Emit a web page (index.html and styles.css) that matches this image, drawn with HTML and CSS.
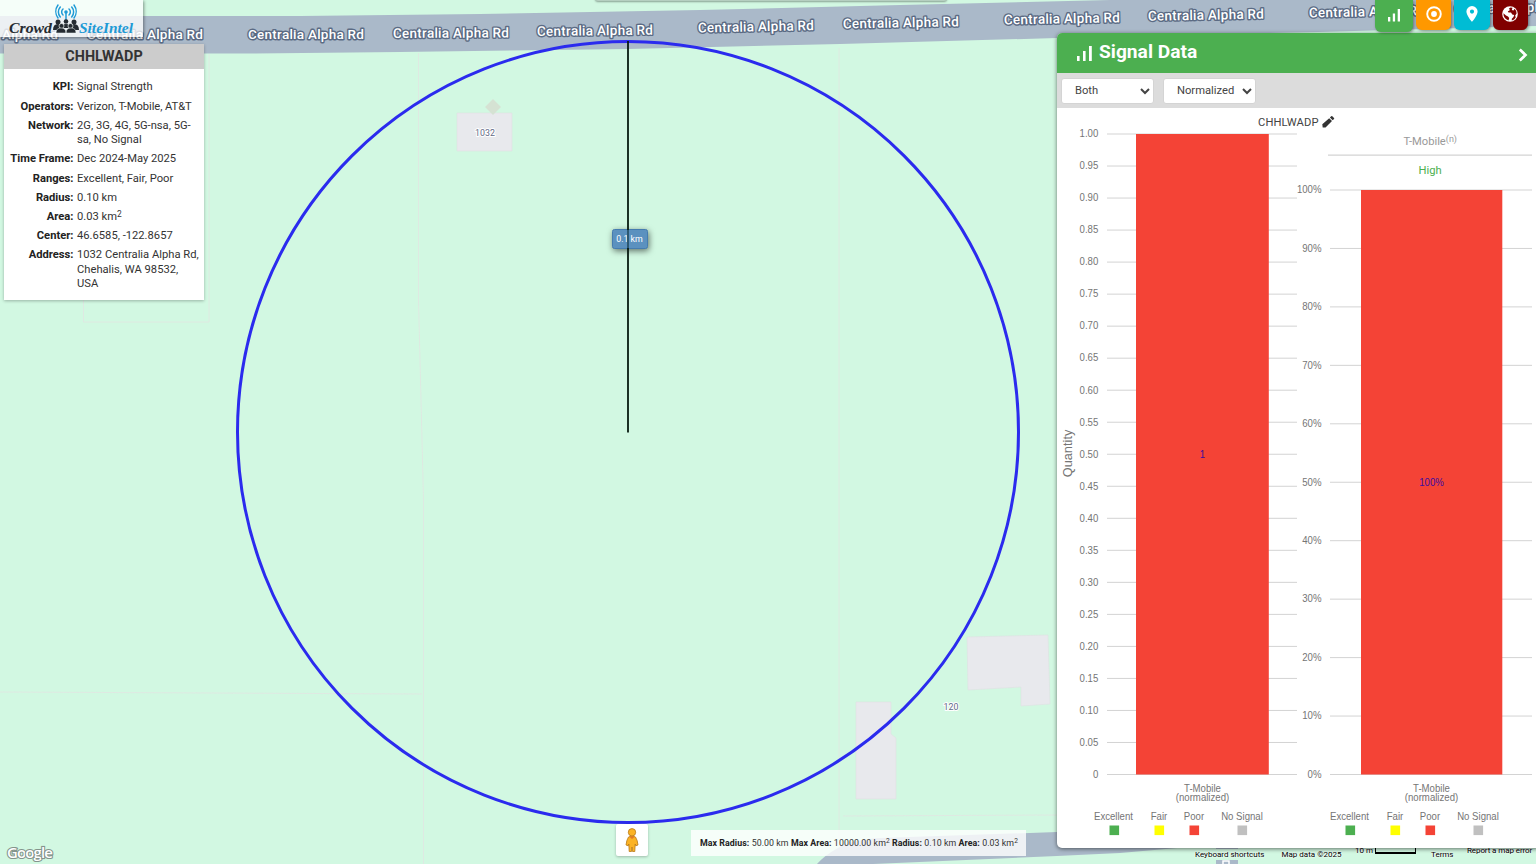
FILE: index.html
```html
<!DOCTYPE html>
<html lang="en">
<head>
<meta charset="utf-8">
<title>Crowd SiteIntel</title>
<link rel="stylesheet" href="styles.css">
</head>
<body>
<main class="app">
  <svg class="map" viewBox="0 0 1536 864" aria-label="Map">
    <rect width="1536" height="864" fill="#d2f8e2"/>
    <g class="parcel">
      <path d="M418.500 53V300L423.500 500V864M839 48V864M0 692L422 694M83.500 300V322H209V54M843 816L1057 815"/>
    </g>
    <path class="road" d="M0 16H300L480 14L700 10L900 5L1110 0H1536V26L1318 32L1057 38L840 44L628 49L400 52L250 53.500H0Z"/>
    <path class="road" d="M817 864Q825 855 838 848Q850 840 880 838L1057 832L1200 828V846L1120 853L1057 856L873 864Z"/>
    <path class="road" d="M1216 846H1238V849H1216ZM1216 860H1238V864H1216Z"/>
    <path d="M1223 864V861H1229V864" fill="none" stroke="#fff" stroke-width="1.500"/>
    <path class="building" d="M457 113H512V151H457ZM967 637L1048 635L1050 704L1021 706V687L968 690ZM856 702H891V734L896 738V799H856Z"/>
    <path d="M493 99L501 107L493 115L485 107Z" fill="#d5e2d3"/>
    <g id="road-labels" class="road-label"></g>
    <g class="house-no"><text x="485" y="136">1032</text><text x="951" y="710">120</text></g>
    <circle cx="628" cy="432" r="390.500" fill="none" stroke="#2b2bee" stroke-width="3"/>
    <g class="radius-tag"><rect x="612.500" y="229.500" width="35" height="19" rx="2"/><text x="629.500" y="242">0.1 km</text></g>
    <path d="M628 41V432.500" stroke="#061a10" stroke-width="1.800"/>
    <path d="M628 230V248" stroke="#4682b4" stroke-width="2" opacity=".55"/>
    <text class="google" x="7" y="858" textLength="46">Google</text>
  </svg>

  <div class="top-strip"></div>

  <div class="logo">
    <svg viewBox="0 0 143 38">
      <g fill="none" stroke="#1e9ad6" stroke-width="1.500" stroke-linecap="round">
        <path d="M63 9a4 4 0 0 0 0 6M69 9a4 4 0 0 1 0 6M60.300 7a7.500 7.500 0 0 0 0 10M71.700 7a7.500 7.500 0 0 1 0 10M58 5a11 11 0 0 0 0 13M74 5a11 11 0 0 1 0 13"/>
        <path d="M66 12V21"/>
      </g>
      <circle cx="66" cy="12" r="1.800" fill="#1e9ad6"/>
      <g fill="#252b31">
        <circle cx="58" cy="22" r="2.500"/><circle cx="66" cy="21.500" r="2.300"/><circle cx="74" cy="22" r="2.500"/>
        <path d="M53 30q0-6 5-6t5 6zM62 28q0-4 4-4t4 4zM69 30q0-6 5-6t5 6z"/>
        <circle cx="61.500" cy="26" r="2.500" stroke="#eff7f4" stroke-width=".7"/><circle cx="70.500" cy="26" r="2.500" stroke="#eff7f4" stroke-width=".7"/>
        <path d="M56 33q0-5 5-5t5 5zM66 33q0-5 5-5t5 5z" stroke="#eff7f4" stroke-width=".5"/>
      </g>
      <text x="9" y="33" textLength="43" lengthAdjust="spacingAndGlyphs" fill="#252b31">Crowd</text>
      <text x="79" y="33" textLength="54" lengthAdjust="spacingAndGlyphs" fill="#1e9ad6">SiteIntel</text>
    </svg>
  </div>

  <aside class="info">
    <h2>CHHLWADP</h2>
    <dl>
      <dt>KPI:</dt><dd>Signal Strength</dd>
      <dt>Operators:</dt><dd class="tight">Verizon, T-Mobile, AT&amp;T</dd>
      <dt>Network:</dt><dd>2G, 3G, 4G, 5G-nsa, 5G-<br>sa, No Signal</dd>
      <dt>Time Frame:</dt><dd>Dec 2024-May 2025</dd>
      <dt>Ranges:</dt><dd>Excellent, Fair, Poor</dd>
      <dt>Radius:</dt><dd>0.10 km</dd>
      <dt>Area:</dt><dd>0.03 km<sup>2</sup></dd>
      <dt>Center:</dt><dd>46.6585, -122.8657</dd>
      <dt>Address:</dt><dd>1032 Centralia Alpha Rd,<br>Chehalis, WA 98532,<br>USA</dd>
    </dl>
  </aside>

  <div class="pegman">
    <svg viewBox="0 0 32 32">
      <path d="M12.500 13Q16 11 19.500 13Q21.500 16 22 21L19.800 21.800L19.200 20L18.800 27.500H16.500L16 23L15.500 27.500H13.200L12.800 20L12.200 21.800L10 21Q10.500 16 12.500 13Z" fill="#fbb324" stroke="#b87918" stroke-width=".8"/>
      <path d="M13 12.500L16 15L19 12.500Z" fill="#e57825"/>
      <circle cx="16" cy="8.300" r="3.700" fill="#fbb324" stroke="#b87918" stroke-width=".8"/>
    </svg>
  </div>

  <div class="limits"><b>Max Radius:</b> 50.00 km <b>Max Area:</b> 10000.00 km<sup>2</sup> <b>Radius:</b> 0.10 km <b>Area:</b> 0.03 km<sup>2</sup></div>

  <footer class="credits">
    <span class="c-keys">Keyboard shortcuts</span><span class="c-data">Map data ©2025</span><span class="c-scale">10 m <i></i></span><span class="c-terms">Terms</span><span class="c-report">Report a map error</span>
  </footer>

  <section class="panel">
    <header>
      <svg class="bars" viewBox="0 0 15 15"><path d="M0 10h2.600v5H0zM6 5h2.600v10H6zM12 0h2.800v15H12z" fill="#fff"/></svg>
      <h1>Signal Data</h1>
      <svg class="chevron" viewBox="0 0 10 14"><path d="M1.800 1.500L7.500 7L1.800 12.500" fill="none" stroke="#fff" stroke-width="2.700"/></svg>
    </header>
    <div class="tools">
      <select><option>Both</option></select>
      <select><option>Normalized</option></select>
    </div>
    <svg class="charts" viewBox="1057 108 479 740">
      <text class="ui dark" x="1258" y="126" textLength="60.500">CHHLWADP</text>
      <path transform="translate(1321 115)" d="M1.300 9.300L1.700 12.500L4.500 12.600L11 6L8.200 3.200ZM8.900 2.500L11.700 5.300L13 4Q13.500 3.400 13 2.900L11.300 1.200Q10.700.7 10.200 1.200Z" fill="#333"/>
      <text class="ui" x="1403.500" y="145">T-Mobile<tspan dy="-3.500" font-size="9">(n)</tspan></text>
      <path d="M1328 155.200H1532" stroke="#d3d3d3" stroke-width="1.300"/>
      <text class="ui high" x="1418.500" y="173.500">High</text>
      <g id="left-axis"></g>
      <g id="right-axis"></g>
      <rect x="1136" y="134" width="132.800" height="640.500" fill="#f44336"/>
      <rect x="1361" y="190" width="141.300" height="584.500" fill="#f44336"/>
      <g class="mid tick value"><text x="1202.500" y="457.800">1</text><text x="1431.500" y="485.800">100%</text></g>
      <text class="quantity" transform="translate(1072 453.500) rotate(-90)">Quantity</text>
      <g class="mid tick"><text x="1202.500" y="791.500">T-Mobile</text><text x="1202.500" y="801">(normalized)</text><text x="1431.500" y="791.500">T-Mobile</text><text x="1431.500" y="801">(normalized)</text></g>
      <g id="legend" class="mid tick"></g>
    </svg>
  </section>

  <nav class="tabs">
    <a class="tab green"><svg viewBox="0 0 16 16"><path d="M2 10h2.300v4.500H2zM6.800 6.500h2.300v8H6.800zM11.700 2h2.300v12.500h-2.300z" fill="#fff"/></svg></a>
    <a class="tab orange"><svg viewBox="0 0 16 16"><circle cx="8" cy="8" r="6.800" fill="none" stroke="#fff" stroke-width="1.900"/><circle cx="8" cy="8" r="2.900" fill="#fff"/></svg></a>
    <a class="tab cyan"><svg viewBox="0 0 16 16"><path fill-rule="evenodd" d="M8 0A5.600 5.600 0 0 0 2.400 5.600C2.400 9.500 8 16 8 16S13.600 9.500 13.600 5.600A5.600 5.600 0 0 0 8 0ZM8 3.500a2.100 2.100 0 1 1 0 4.200a2.100 2.100 0 0 1 0-4.200Z" fill="#fff"/></svg></a>
    <a class="tab maroon"><svg viewBox="0 0 16 16"><circle cx="8" cy="8" r="7.800" fill="#fff"/><path d="M8.500 1.400L6.800 2.800L8 4L5.800 5.600L6.500 6.600L9 6.600L10.300 8.500L12.200 9L11.500 11L9.800 12.800L9.800 14.500Q12.500 13.800 13.700 11.500L13.200 9.500L14.600 7.500Q14.500 4.500 12.600 2.800L11.500 4.500L9.800 4L10.500 1.800ZM1.400 7.200Q1.400 12.500 6.500 14.400L7.200 12L6 10.500L4 9.500Z" fill="#800000"/></svg></a>
  </nav>
</main>
<script src="script.js"></script>
</body>
</html>
```
FILE: styles.css
```css
* { box-sizing: border-box; }
body { margin: 0; overflow: hidden; font-family: Roboto, "Liberation Sans", sans-serif; color: #333; }
.app { position: relative; width: 1536px; height: 864px; overflow: hidden; }
.map { display: block; width: 100%; height: 100%; }
.parcel { fill: none; stroke: #e0e6e2; stroke-width: 1; opacity: .85; }
.road { fill: #aab9c9; }
.building { fill: #e8e9ed; stroke: #dfe0e3; stroke-width: .6; }
.road-label { font: 500 13.600px Roboto, sans-serif; fill: #fff; stroke: #5b6b84; stroke-width: 2.800px; stroke-linejoin: round; paint-order: stroke; }
.house-no { font: 8.800px Roboto, sans-serif; fill: #5f6a86; text-anchor: middle; stroke: #fff; stroke-width: 2px; paint-order: stroke; }
.radius-tag rect { fill: #5b91bf; stroke: #457caf; filter: drop-shadow(1px 2px 3px rgba(0, 0, 0, .55)); }
.radius-tag text { font: 8.800px Roboto, sans-serif; fill: #fff; text-anchor: middle; }
.google { font: 600 15px "Open Sans", sans-serif; fill: #fff; stroke: #84948c; stroke-width: 2.200px; paint-order: stroke; }

.top-strip { position: absolute; top: -10px; left: 595px; width: 352px; height: 11px; border-radius: 3px; background: #b5cfc0; box-shadow: 0 1px 2px rgba(0, 0, 0, .35); }
.logo { position: absolute; top: 0; left: 0; width: 142.500px; height: 37px; background: rgba(255, 255, 255, .78); box-shadow: 1px 1px 3px rgba(0, 0, 0, .4); }
.logo svg { display: block; width: 143px; height: 38px; font: italic bold 15px "Liberation Serif", serif; }

.info { position: absolute; top: 44px; left: 4px; width: 200px; height: 256px; background: #fff; box-shadow: 0 1px 3px rgba(0, 0, 0, .28); font-size: 11.200px; line-height: 14.400px; }
.info h2 { margin: 0; height: 25px; background: #ccc; text-align: center; font-size: 14.400px; line-height: 26px; font-weight: 700; }
.info dl { display: grid; grid-template-columns: 69.500px 1fr; column-gap: 3.500px; row-gap: 4.800px; margin: 11.400px 0 0; }
.info dt { font-weight: 700; text-align: right; white-space: nowrap; color: #222; }
.info dd { margin: 0; white-space: nowrap; }
.info .tight { letter-spacing: -.07px; }
sup { font-size: 75%; line-height: 0; vertical-align: baseline; position: relative; top: -.4em; }

.pegman { position: absolute; left: 616px; top: 824px; width: 32px; height: 32px; border-radius: 2px; background: #fff; box-shadow: 0 1px 3px rgba(0, 0, 0, .25); }
.pegman svg { display: block; width: 32px; height: 32px; }
.limits { position: absolute; left: 691px; top: 830px; width: 335px; height: 26px; padding-left: 9px; background: rgba(255, 255, 255, .8); font-size: 8.800px; letter-spacing: .07px; line-height: 26px; white-space: nowrap; }
.limits b { color: #222; }
.credits { position: absolute; left: 1195px; top: 844px; display: flex; align-items: flex-start; font-size: 8px; line-height: 12px; color: #000; white-space: nowrap; text-shadow: 0 0 2px #fff, 0 0 2px #fff; }
.c-keys { width: 86.500px; padding-top: 5px; }
.c-data { width: 73.500px; padding-top: 5px; }
.c-scale { width: 76px; padding-top: 1px; }
.c-scale i { display: inline-block; width: 41px; height: 6px; border: solid #000; border-width: 0 1.500px 2px; vertical-align: -1px; }
.c-terms { width: 36px; padding-top: 5px; }
.c-report { padding-top: 1px; letter-spacing: -.09px; }

.panel { position: absolute; left: 1057px; top: 33px; width: 484px; height: 815px; border-radius: 5px; background: #fff; box-shadow: 0 1px 4px rgba(0, 0, 0, .55); overflow: hidden; }
.panel header { display: flex; align-items: center; height: 40px; padding: 0 13px 0 20px; background: #4caf50; color: #fff; }
.bars { width: 15px; height: 15px; margin: 0 7px 0 0; }
.panel h1 { margin: 0; font-size: 19.200px; line-height: 38px; height: 40px; font-weight: 700; }
.chevron { width: 10px; height: 14px; margin: 3px 0 0 auto; }
.tools { display: flex; gap: 9px; height: 35px; padding: 4.500px 4px; background: #dcdcdc; }
.tools select { width: 93px; height: 26px; padding: 0 0 0 9px; border: 1px solid #d4d4d4; border-radius: 3px; background: #fff; color: #444; font: 11.200px Roboto, sans-serif; }
.charts { display: block; width: 479px; height: 740px; font: 10.400px "Liberation Sans", Arial, sans-serif; fill: #757575; }
.ui { font-family: Roboto, sans-serif; font-size: 11.200px; fill: #999; }
.dark { fill: #444; }
.high { fill: #4caf50; }
.mid { text-anchor: middle; }
.end { text-anchor: end; }
.grid { stroke: #d3d3d3; stroke-width: 1; }
.value { fill: #3c0ca0; }
.quantity { font-size: 12.800px; text-anchor: middle; }

.tabs { position: absolute; top: 0; left: 1375px; display: flex; align-items: flex-start; gap: 3px; }
.tab { display: flex; justify-content: center; align-items: center; width: 35.300px; height: 30px; padding-bottom: 3px; border-radius: 0 0 6px 6px; box-shadow: 1px 1px 3px rgba(0, 0, 0, .4); }
.tab svg { width: 16px; height: 16px; }
.green { width: 38px; height: 32px; padding-bottom: 2px; background: #4caf50; }
.orange { background: #ff9800; }
.cyan { background: #00bcd4; }
.maroon { background: #800000; }
```
FILE: script.js
```js
const NS = 'http://www.w3.org/2000/svg';

function add(parent, tag, attrs, text) {
  const node = document.createElementNS(NS, tag);
  for (const key in attrs) node.setAttribute(key, attrs[key]);
  if (text !== undefined) node.textContent = text;
  parent.appendChild(node);
}

const labels = document.getElementById('road-labels');
[[-58, 39, 0], [87, 39, 0], [248, 39, 0], [393, 38, -0.3], [537, 36, -0.7], [698, 32.5, -1.2],
 [843, 28.5, -1.1], [1004, 24.5, -1.1], [1148, 20.8, -1.1], [1309, 17.5, -1.1], [1454, 13.5, -1.1]
].forEach(([x, y, angle]) => add(labels, 'text', {
  x, y, textLength: 116, transform: `rotate(${angle} ${x} ${y})`
}, 'Centralia Alpha Rd'));

function axis(id, count, top, left, right, labelX, format) {
  const group = document.getElementById(id);
  group.classList.add('tick');
  for (let i = 0; i <= count; i++) {
    const y = 774.5 - (774.5 - top) * i / count;
    add(group, 'path', { class: 'grid', d: `M${left} ${y}H${right}` });
    add(group, 'text', { class: 'end', x: labelX, y: y + 3.3 }, format(i));
  }
}
axis('left-axis', 20, 134, 1107, 1297, 1098.3, i => i ? (i * 0.05).toFixed(2) : '0');
axis('right-axis', 10, 190, 1330, 1532, 1321.5, i => `${i * 10}%`);

const legend = document.getElementById('legend');
[0, 236].forEach(dx => {
  [['Excellent', 1113.5, 1114.5, '#4caf50'], ['Fair', 1159, 1159.5, '#ffff00'],
   ['Poor', 1194, 1194.5, '#f44336'], ['No Signal', 1242, 1242.5, '#c0c0c0']
  ].forEach(([name, tx, sx, color]) => {
    add(legend, 'text', { x: tx + dx, y: 820.2 }, name);
    add(legend, 'rect', { x: sx + dx - 5, y: 825.5, width: 9.6, height: 9.6, fill: color });
  });
});

// Slightly condensed chart labels
document.querySelectorAll('.tick text').forEach(node => {
  node.setAttribute('lengthAdjust', 'spacingAndGlyphs');
  node.setAttribute('textLength', (node.getComputedTextLength() * 0.925).toFixed(2));
});
```
